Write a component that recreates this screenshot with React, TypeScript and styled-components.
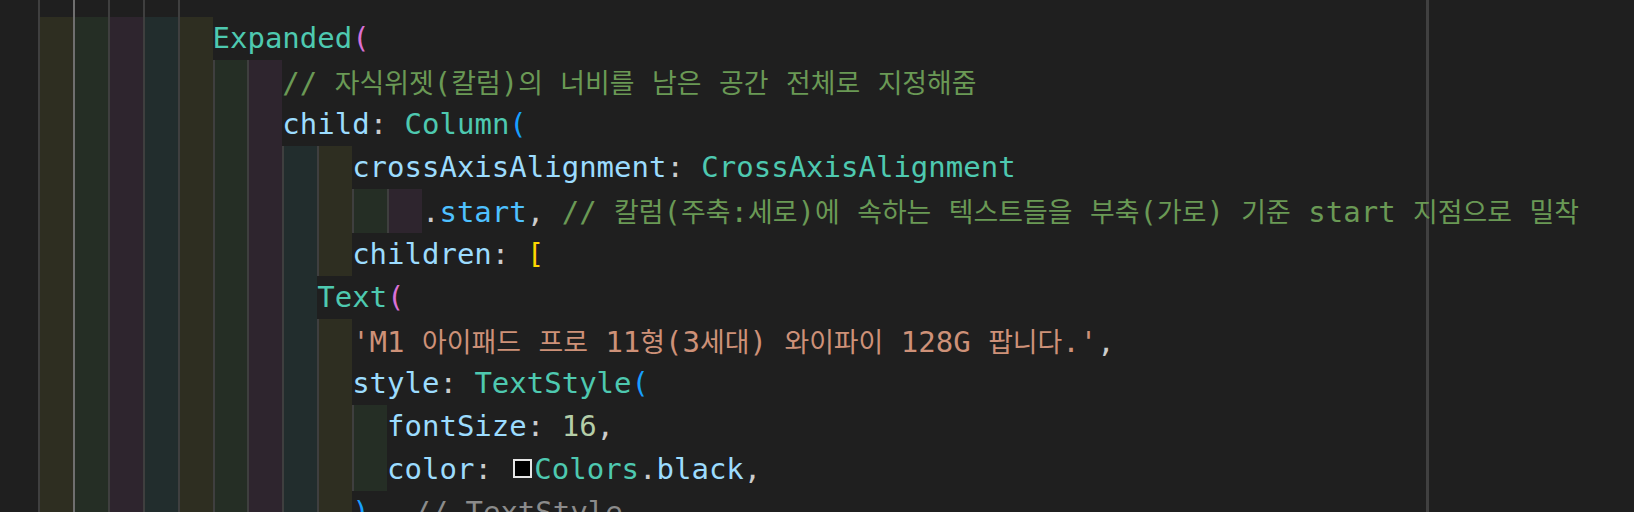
import React from "react";
import styled, { createGlobalStyle } from "styled-components";

const GlobalStyle = createGlobalStyle`
  html, body {
    margin: 0;
    padding: 0;
    background: #1f1f1f;
  }
  body {
    width: 1634px;
    height: 512px;
    overflow: hidden;
  }
`;

type Kind =
  | "cls"
  | "prop"
  | "punct"
  | "comment"
  | "str"
  | "num"
  | "enum"
  | "gold"
  | "orchid"
  | "blue"
  | "label";

const COLORS: Record<Kind, string> = {
  cls: "#4ec9b0",
  prop: "#9cdcfe",
  punct: "#cccccc",
  comment: "#6a9955",
  str: "#ce9178",
  num: "#b5cea8",
  enum: "#4fc1ff",
  gold: "#ffd700",
  orchid: "#da70d6",
  blue: "#179fff",
  label: "#8b8b8b",
};

const TINTS = [
  "rgba(255, 255, 64, 0.07)",
  "rgba(127, 255, 127, 0.07)",
  "rgba(255, 127, 255, 0.07)",
  "rgba(79, 236, 236, 0.07)",
];

const Editor = styled.div`
  position: relative;
  width: 1634px;
  height: 512px;
  overflow: hidden;
  background: #1f1f1f;
  font-family: "DejaVu Sans Mono", "Noto Sans CJK KR", monospace;
  font-size: 29px;
  color: #cccccc;
`;

const Ruler = styled.div`
  position: absolute;
  top: 0;
  bottom: 0;
  left: 1426px;
  width: 3px;
  background: #404040;
`;

const Lines = styled.div`
  position: relative;
  display: flex;
  flex-direction: column;
  margin-top: -26px;
  padding-left: 38px;
`;

const Line = styled.div`
  display: flex;
  align-items: stretch;
  height: 43.1px;
  line-height: 43.1px;
  white-space: pre;
`;

const Indent = styled.span<{ $tint?: string; $active?: boolean }>`
  flex: none;
  width: 2ch;
  box-sizing: border-box;
  border-left: 2px solid ${(p) => (p.$active ? "#6f6f6f" : "#3f3f3f")};
  background: ${(p) => p.$tint ?? "transparent"};
`;

const Code = styled.span`
  flex: none;
`;

const Token = styled.span<{ $k: Kind }>`
  color: ${(p) => COLORS[p.$k]};
`;

const Hangul = styled.span`
  font-family: "Noto Sans CJK KR", sans-serif;
  font-size: 26.9px;
`;

const Swatch = styled.span`
  display: inline-block;
  box-sizing: border-box;
  width: 19px;
  height: 19px;
  margin: 0 2px 0 4px;
  border: 2px solid #e6e6e6;
  background: #000000;
  vertical-align: 1px;
`;

const ClosingLabel = styled.span`
  margin-left: 26px;
  color: #8b8b8b;
`;

const HANGUL = /([\u1100-\u11ff\u3130-\u318f\uac00-\ud7a3]+)/;

function ko(text: string): React.ReactNode[] {
  return text.split(HANGUL).map((part, i) =>
    i % 2 === 1 ? <Hangul key={i}>{part}</Hangul> : <React.Fragment key={i}>{part}</React.Fragment>
  );
}

const T = ({ k, children }: { k: Kind; children: string }) => (
  <Token $k={k}>{ko(children)}</Token>
);

type Row = { levels: number; tinted: boolean; content?: React.ReactNode };

const rows: Row[] = [
  { levels: 5, tinted: false },
  {
    levels: 5,
    tinted: true,
    content: (
      <>
        <T k="cls">Expanded</T>
        <T k="orchid">(</T>
      </>
    ),
  },
  {
    levels: 7,
    tinted: true,
    content: <T k="comment">// 자식위젯(칼럼)의 너비를 남은 공간 전체로 지정해줌</T>,
  },
  {
    levels: 7,
    tinted: true,
    content: (
      <>
        <T k="prop">child</T>
        <T k="punct">: </T>
        <T k="cls">Column</T>
        <T k="blue">(</T>
      </>
    ),
  },
  {
    levels: 9,
    tinted: true,
    content: (
      <>
        <T k="prop">crossAxisAlignment</T>
        <T k="punct">: </T>
        <T k="cls">CrossAxisAlignment</T>
      </>
    ),
  },
  {
    levels: 11,
    tinted: true,
    content: (
      <>
        <T k="punct">.</T>
        <T k="enum">start</T>
        <T k="punct">, </T>
        <T k="comment">// 칼럼(주축:세로)에 속하는 텍스트들을 부축(가로) 기준 start 지점으로 밀착</T>
      </>
    ),
  },
  {
    levels: 9,
    tinted: true,
    content: (
      <>
        <T k="prop">children</T>
        <T k="punct">: </T>
        <T k="gold">[</T>
      </>
    ),
  },
  {
    levels: 8,
    tinted: true,
    content: (
      <>
        <T k="cls">Text</T>
        <T k="orchid">(</T>
      </>
    ),
  },
  {
    levels: 9,
    tinted: true,
    content: (
      <>
        <T k="str">'M1 아이패드 프로 11형(3세대) 와이파이 128G 팝니다.'</T>
        <T k="punct">,</T>
      </>
    ),
  },
  {
    levels: 9,
    tinted: true,
    content: (
      <>
        <T k="prop">style</T>
        <T k="punct">: </T>
        <T k="cls">TextStyle</T>
        <T k="blue">(</T>
      </>
    ),
  },
  {
    levels: 10,
    tinted: true,
    content: (
      <>
        <T k="prop">fontSize</T>
        <T k="punct">: </T>
        <T k="num">16</T>
        <T k="punct">,</T>
      </>
    ),
  },
  {
    levels: 10,
    tinted: true,
    content: (
      <>
        <T k="prop">color</T>
        <T k="punct">: </T>
        <Swatch />
        <T k="cls">Colors</T>
        <T k="punct">.</T>
        <T k="prop">black</T>
        <T k="punct">,</T>
      </>
    ),
  },
  {
    levels: 9,
    tinted: true,
    content: (
      <>
        <T k="blue">)</T>
        <T k="punct">,</T>
        <ClosingLabel>// TextStyle</ClosingLabel>
      </>
    ),
  },
];

export default function App() {
  return (
    <>
      <GlobalStyle />
      <Editor>
        <Ruler />
        <Lines>
          {rows.map((row, i) => (
            <Line key={i}>
              {Array.from({ length: row.levels }).map((_, lvl) => (
                <Indent
                  key={lvl}
                  $active={lvl === 1}
                  $tint={row.tinted ? TINTS[lvl % 4] : undefined}
                />
              ))}
              {row.content && <Code>{row.content}</Code>}
            </Line>
          ))}
        </Lines>
      </Editor>
    </>
  );
}
